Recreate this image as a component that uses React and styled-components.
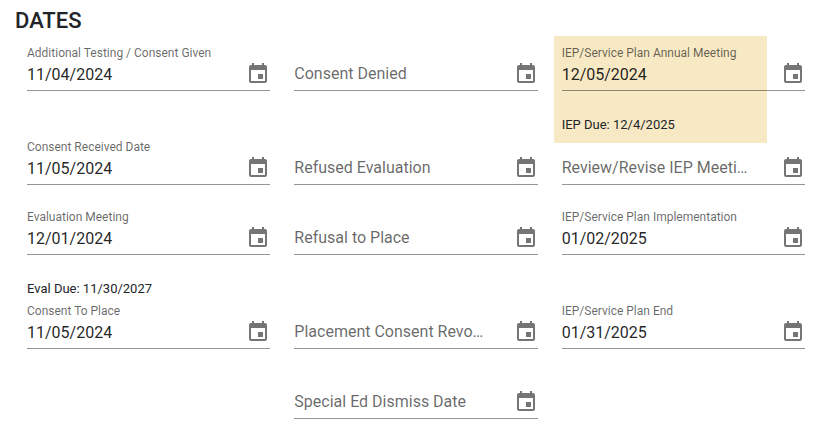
import React, { useState } from 'react';
import styled, { createGlobalStyle } from 'styled-components';
import { MdEvent } from 'react-icons/md';

// one entry per grid cell, row by row
const fields = [
  { id: 'additionalTesting', label: 'Additional Testing / Consent Given', value: '11/04/2024' },
  { id: 'consentDenied', label: 'Consent Denied' },
  {
    id: 'annualMeeting',
    label: 'IEP/Service Plan Annual Meeting',
    value: '12/05/2024',
    note: 'IEP Due: 12/4/2025',
    highlighted: true,
  },
  { id: 'consentReceived', label: 'Consent Received Date', value: '11/05/2024' },
  { id: 'refusedEvaluation', label: 'Refused Evaluation' },
  { id: 'reviewMeeting', label: 'Review/Revise IEP Meeting' },
  {
    id: 'evaluationMeeting',
    label: 'Evaluation Meeting',
    value: '12/01/2024',
    note: 'Eval Due: 11/30/2027',
  },
  { id: 'refusalToPlace', label: 'Refusal to Place' },
  { id: 'implementation', label: 'IEP/Service Plan Implementation', value: '01/02/2025' },
  { id: 'consentToPlace', label: 'Consent To Place', value: '11/05/2024' },
  { id: 'consentRevoked', label: 'Placement Consent Revoked' },
  { id: 'planEnd', label: 'IEP/Service Plan End', value: '01/31/2025' },
  { id: 'dismissDate', label: 'Special Ed Dismiss Date', column: 2 },
];

const DateField = ({ id, label, value: initial = '', note, highlighted, column }) => {
  const [value, setValue] = useState(initial);

  return (
    <Cell $column={column}>
      {highlighted && <Highlight />}
      <Field>
        <Label htmlFor={id} $filled={value !== ''}>
          {label}
        </Label>
        <Input
          id={id}
          type='text'
          value={value}
          onChange={(e) => setValue(e.target.value)}
        />
        <PickerButton type='button' aria-label={`Choose date, ${label}`}>
          <MdEvent size={24} />
        </PickerButton>
      </Field>
      {note && <Note>{note}</Note>}
    </Cell>
  );
};

const App = () => (
  <>
    <GlobalStyle />
    <Section>
      <Title>DATES</Title>
      <Dates>
        {fields.map((field) => (
          <DateField key={field.id} {...field} />
        ))}
      </Dates>
    </Section>
  </>
);

const GlobalStyle = createGlobalStyle`
  body {
    margin: 0;
    background: #fff;
    color: #212529;
    font-family: Roboto, 'Liberation Sans', sans-serif;
  }
`;

const Section = styled.section`
  padding: 7px 15px 0;
`;

const Title = styled.h2`
  margin: 0 0 8px;
  font-size: 22px;
  font-weight: 500;
  line-height: 28px;
`;

const Dates = styled.form`
  display: grid;
  grid-template-columns: repeat(3, minmax(0, 1fr));
  column-gap: 24px;
  padding: 0 16px 0 12px;
`;

const Cell = styled.div`
  display: flow-root;
  position: relative;
  isolation: isolate;
  grid-column: ${(props) => props.$column || 'auto'};
`;

const Highlight = styled.div`
  position: absolute;
  top: -7px;
  right: 38px;
  bottom: -6px;
  left: -8px;
  z-index: -1;
  background: #f8e9c5;
`;

const Field = styled.div`
  display: grid;
  grid-template-columns: minmax(0, 1fr) 24px;
  grid-template-rows: 19px 24px;
  column-gap: 28px;
  align-items: center;
  margin-bottom: 22px;
  padding-bottom: 4px;
  border-bottom: 1px solid rgba(0, 0, 0, 0.42);
`;

const Label = styled.label`
  grid-row: ${(props) => (props.$filled ? 1 : 2)};
  grid-column: 1;
  align-self: end;
  z-index: 1;
  overflow: hidden;
  color: rgba(0, 0, 0, 0.6);
  font-size: ${(props) => (props.$filled ? '12px' : '16px')};
  line-height: ${(props) => (props.$filled ? '18px' : '24px')};
  white-space: nowrap;
  text-overflow: ellipsis;
  cursor: text;
`;

const Input = styled.input`
  grid-row: 2;
  grid-column: 1;
  width: 100%;
  height: 24px;
  padding: 0;
  border: none;
  outline: none;
  background: none;
  color: rgba(0, 0, 0, 0.87);
  font-family: inherit;
  font-size: 16px;
`;

const PickerButton = styled.button`
  grid-row: 2;
  grid-column: 2;
  display: flex;
  padding: 0;
  border: none;
  background: none;
  color: rgba(0, 0, 0, 0.54);
  cursor: pointer;
`;

const Note = styled.p`
  margin: 0;
  font-size: 13px;
  line-height: 24px;
`;

export default App;
